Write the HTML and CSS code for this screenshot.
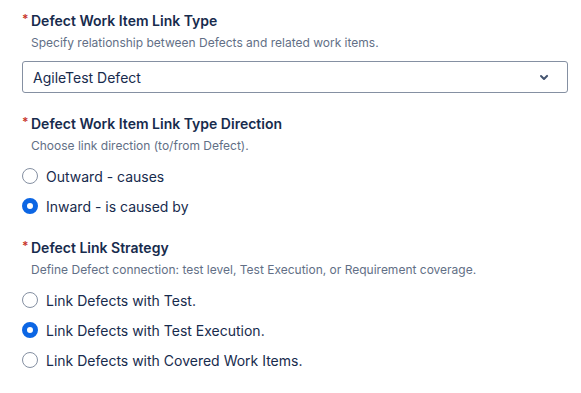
FILE: index.html
```html
<!DOCTYPE html>
<html lang="en">
<head>
    <meta charset="UTF-8">
    <title>Defect settings</title>
    <link rel="stylesheet" href="styles.css">
</head>
<body>
    <div class="form">
        <div class="field">
            <div class="label"><span class="req">*</span>Defect Work Item Link Type</div>
            <p class="desc">Specify relationship between Defects and related work items.</p>
            <div class="select">
                <span>AgileTest Defect</span>
                <svg class="chevron" width="24" height="24" viewBox="0 0 24 24"><path d="M8.3 10.3a1 1 0 0 1 1.4 0L12 12.6l2.3-2.3a1 1 0 1 1 1.4 1.4l-3 3a1 1 0 0 1-1.4 0l-3-3a1 1 0 0 1 0-1.4z" fill="#44546F"/></svg>
            </div>
        </div>

        <div class="field">
            <div class="label"><span class="req">*</span>Defect Work Item Link Type Direction</div>
            <p class="desc">Choose link direction (to/from Defect).</p>
            <div class="options">
                <label class="radio"><span class="dot"></span>Outward - causes</label>
                <label class="radio"><span class="dot checked"></span>Inward - is caused by</label>
            </div>
        </div>

        <div class="field">
            <div class="label"><span class="req">*</span>Defect Link Strategy</div>
            <p class="desc">Define Defect connection: test level, Test Execution, or Requirement coverage.</p>
            <div class="options">
                <label class="radio"><span class="dot"></span>Link Defects with Test.</label>
                <label class="radio"><span class="dot checked"></span>Link Defects with Test Execution.</label>
                <label class="radio"><span class="dot"></span>Link Defects with Covered Work Items.</label>
            </div>
        </div>
    </div>
</body>
</html>
```

FILE: styles.css
```css
* {
    margin: 0;
    padding: 0;
    box-sizing: border-box;
}

body {
    background: #fff;
    font-family: Inter, 'Noto Sans', sans-serif;
    color: #172B4D;
}

.form {
    padding: 11px 13px 0 22px;
    display: flex;
    flex-direction: column;
    gap: 17px;
}

.label {
    font-size: 14px;
    font-weight: 600;
    line-height: 20px;
    color: #172B4D;
    display: flex;
}

.req {
    color: #C9372C;
    font-size: 12px;
    width: 9px;
    line-height: 16px;
}

.desc {
    font-size: 12px;
    line-height: 16px;
    color: #626F86;
    margin: 4px 0 0 9px;
}

.select {
    margin: 10px 0 4px;
    height: 32px;
    border: 1px solid #8590A2;
    border-radius: 3px;
    display: flex;
    align-items: center;
    justify-content: space-between;
    padding: 0 11px 0 10px;
    font-size: 14px;
}

.options {
    margin-top: 7px;
    display: flex;
    flex-direction: column;
}

.radio {
    display: flex;
    align-items: center;
    gap: 8px;
    height: 30px;
    font-size: 14px;
    color: #172B4D;
}

.dot {
    width: 16px;
    height: 16px;
    border-radius: 50%;
    border: 1px solid #8590A2;
    background: #fff;
    flex-shrink: 0;
}

.dot.checked {
    border: 5px solid #0C66E4;
}
```
